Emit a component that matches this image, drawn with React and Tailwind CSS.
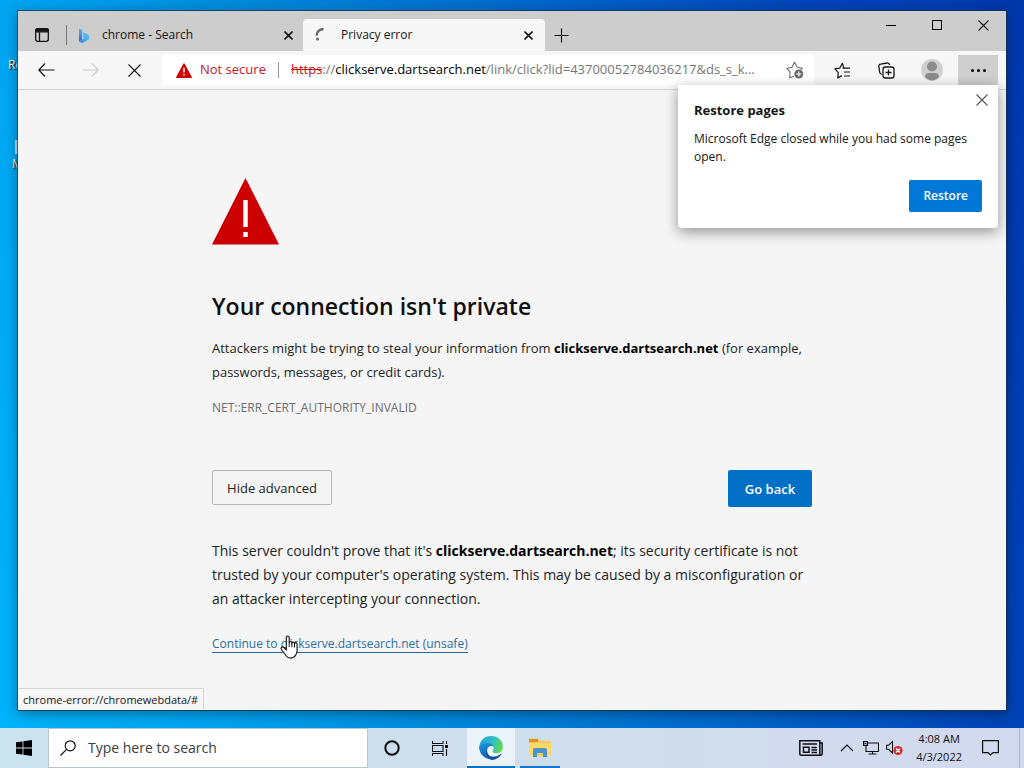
import React from "react";

const svgBase = { fill: "none", stroke: "currentColor", "aria-hidden": true };

function CrossIcon({ size = 10, width = 1 }) {
  return (
    <svg {...svgBase} width={size} height={size} viewBox={`0 0 ${size} ${size}`} strokeWidth={width}>
      <path d={`M0.5 0.5 L${size - 0.5} ${size - 0.5} M${size - 0.5} 0.5 L0.5 ${size - 0.5}`} />
    </svg>
  );
}

function TabActionsIcon() {
  return (
    <svg {...svgBase} width="14" height="14" viewBox="0 0 14 14" strokeWidth="1.3">
      <rect x="0.7" y="0.7" width="12.6" height="12.6" rx="2" />
      <path d="M0.7 3.8V2.5a1.8 1.8 0 0 1 1.8-1.8h9a1.8 1.8 0 0 1 1.8 1.8v1.3z" fill="currentColor" />
      <path d="M4.5 4v9.5" />
    </svg>
  );
}

function BingIcon() {
  return (
    <svg width="12" height="15" viewBox="0 0 12 15" aria-hidden="true">
      <defs>
        <linearGradient id="bingStem" x1="0" y1="0" x2="0" y2="1">
          <stop offset="0" stopColor="#4fb6f2" />
          <stop offset="1" stopColor="#2f62dc" />
        </linearGradient>
        <linearGradient id="bingBowl" x1="0" y1="1" x2="1" y2="0">
          <stop offset="0" stopColor="#2b84dc" />
          <stop offset="1" stopColor="#63d0f5" />
        </linearGradient>
      </defs>
      <path d="M1 0.5l2.4 1c.5.2.7.6.7 1.100V11.500L1 13.300z" fill="url(#bingStem)" />
      <path d="M5.300 5.200c-.2-.5.200-.8.700-.6l3.400 1.500c1.400.600 2.100 1.700 2.100 3.100 0 1.300-.6 2.100-1.700 2.800L6 14.200c-1.800 1-4 .6-5-.9l5.700-3.200-.9-.6c-.4-.3-.6-.7-.5-1.100z" fill="url(#bingBowl)" />
    </svg>
  );
}

function SpinnerIcon() {
  return (
    <svg {...svgBase} width="14" height="14" viewBox="0 0 14 14" strokeWidth="2.4">
      <path d="M1.500 7.500A6.500 6.500 0 0 1 8.500 1.200" />
      <circle cx="2.500" cy="11" r="1.500" fill="currentColor" stroke="none" />
    </svg>
  );
}

function ArrowIcon({ flip }) {
  return (
    <svg {...svgBase} width="17" height="14" viewBox="0 0 17 14" strokeWidth="1.200" className={flip ? "-scale-x-100" : ""}>
      <path d="M7 0.500L0.800 7L7 13.500M0.800 7H16.500" />
    </svg>
  );
}

function SmallWarning() {
  return (
    <svg width="16" height="15" viewBox="0 0 16 15" aria-hidden="true">
      <path d="M8 0.800L15.300 14.300H0.700z" fill="#c00" stroke="#c00" strokeWidth="1.200" strokeLinejoin="round" />
      <path d="M8 4.800v4.700M8 11v1.600" stroke="#fff" strokeWidth="1.500" />
    </svg>
  );
}

function AddFavoriteIcon() {
  return (
    <svg {...svgBase} width="18" height="18" viewBox="0 0 18 18" strokeWidth="1.100" className="text-[#6b6b6b]">
      <path d="M8 15.200L3.600 16.800l.5-5.600L0.900 7.300l5-1L8.600 1.300l2.700 5 5 1-1.500 1.500" strokeLinejoin="round" />
      <circle cx="12.800" cy="13" r="4.500" fill="currentColor" stroke="none" />
      <path d="M12.800 10.500v5M10.300 13h5" stroke="#fff" strokeWidth="1.200" />
    </svg>
  );
}

function FavoritesIcon() {
  return (
    <svg {...svgBase} width="17" height="17" viewBox="0 0 17 17" strokeWidth="1.200" strokeLinejoin="round">
      <path d="M10 6L8.300 1.200 5.900 6.100 0.900 6.900l3.400 3.800-.6 5.200L8 13.600" />
      <path d="M8.500 6.100h7.500M10 10h6M10 14h6" />
    </svg>
  );
}

function CollectionsIcon() {
  return (
    <svg {...svgBase} width="17" height="17" viewBox="0 0 17 17" strokeWidth="1.300">
      <path d="M3.800 12.300C2.300 12 1.800 11 1.600 9.800L0.900 4.600c-.2-1.300.4-2.200 1.700-2.400L9 1c1.300-.2 2.300.4 2.700 2" />
      <rect x="5" y="5" width="11" height="11" rx="2.200" />
      <path d="M10.500 7.500v6M7.500 10.500h6" />
    </svg>
  );
}

function AvatarIcon() {
  return (
    <svg width="22" height="22" viewBox="0 0 22 22" aria-hidden="true">
      <circle cx="11" cy="11" r="11" fill="#d0d0d0" />
      <circle cx="11" cy="7.500" r="5" fill="#8b8b8b" />
      <path d="M3.800 17.500c.6-2.500 2.200-3.500 4.200-3.500h6c2 0 3.600 1 4.200 3.500A10.800 10.800 0 0 1 11 21.500a10.800 10.800 0 0 1-7.200-4z" fill="#8b8b8b" />
    </svg>
  );
}

function HandCursor() {
  return (
    <svg width="19" height="24" viewBox="0 0 19 24" className="pointer-events-none absolute left-[68px] top-0" aria-hidden="true">
      <path
        d="M6.300 15V2.600c0-1 .6-1.600 1.400-1.600s1.500.6 1.500 1.600V7.500c.2-.7.700-1 1.300-1 .8 0 1.400.5 1.400 1.300.3-.5.700-.7 1.200-.7.800 0 1.400.5 1.400 1.300.3-.4.700-.5 1.100-.5.900 0 1.500.6 1.500 1.600v6c0 2-.6 3.200-1.400 4.600-1 1.900-2.600 3-4.900 3-2 0-3.400-.6-4.500-2.100L1.500 14.500c-.6-.8-.6-1.700 0-2.200.7-.6 1.600-.4 2.300.2z"
        fill="#fff"
        stroke="#111"
        strokeWidth="1.100"
      />
      <path d="M9.200 7v5M11.900 7.800V12.200M14.500 8.500v4" stroke="#111" strokeWidth="1" />
    </svg>
  );
}

function EdgeIcon() {
  return (
    <svg width="24" height="24" viewBox="0 0 24 24" aria-hidden="true">
      <defs>
        <linearGradient id="edgeTop" x1="0" y1="0.300" x2="1" y2="0.600">
          <stop offset="0" stopColor="#1f9fdf" />
          <stop offset="0.500" stopColor="#2bc0c8" />
          <stop offset="1" stopColor="#66d84f" />
        </linearGradient>
        <linearGradient id="edgeLeft" x1="0" y1="0" x2="0.400" y2="1">
          <stop offset="0" stopColor="#1d97dd" />
          <stop offset="1" stopColor="#1263bd" />
        </linearGradient>
      </defs>
      <path d="M0.200 11C.8 4.500 5.800 0 12 0c7 0 12 5 12 10.500 0 4-3 6.700-6.500 6.700-2.400 0-4-.8-4-1.700 0-.5 1.100-1 1.100-2.900 0-2.900-2.800-5.500-6.400-5.500-4.200 0-6.900 2-8 3.900z" fill="url(#edgeTop)" />
      <path d="M0.100 11.500C.8 8.600 4 6.700 8 6.700c3.700 0 5.800 1.600 6.500 3.800-3-1.600-6.500.6-6.500 4.300 0 4.300 3.700 8 8.600 7.600A12 12 0 0 1 0.100 11.500z" fill="url(#edgeLeft)" />
      <path d="M8.300 12.700c-1.500 5 2.700 8.600 7.200 7.900 2.700-.4 4.900-1.400 6.400-2.900.5-.4.800 0 .5.500-2 3.300-5.600 5.600-9.600 5.700-4.800-1.600-8-6.900-4.500-11.200z" fill="#124f9c" />
    </svg>
  );
}

function ExplorerIcon() {
  return (
    <svg width="24" height="20" viewBox="0 0 24 20" aria-hidden="true">
      <path d="M1 0.500h9l1.500 2.500H22a1 1 0 0 1 1 1V17H1z" fill="#f8c64a" />
      <path d="M1 1h9v3H1z" fill="#d9932a" />
      <path d="M1 5h22v12.500H1z" fill="#ffd768" />
      <path d="M5 19V12a2 2 0 0 1 2-2h10a2 2 0 0 1 2 2v7h-4v-4H9v4z" fill="#4794cf" />
      <path d="M9 15h6v3H9z" fill="#f9cd55" />
    </svg>
  );
}

function WindowButton({ label, children }) {
  return (
    <button type="button" aria-label={label} className="flex h-7 w-[46px] items-center justify-center">
      {children}
    </button>
  );
}

function ToolButton({ label, className = "", children }) {
  return (
    <button type="button" aria-label={label} className={`flex h-[30px] w-11 shrink-0 items-center justify-center ${className}`}>
      {children}
    </button>
  );
}

function TabStrip() {
  return (
    <div className="flex h-10 items-end bg-[#cdcdcd] text-xs">
      <button type="button" aria-label="Tab actions menu" className="flex h-8 w-12 items-center justify-center">
        <TabActionsIcon />
      </button>
      <div className="mb-1.5 h-5 w-px bg-[#777]" />
      <div className="flex h-8 w-[236px] items-center gap-3 pl-[11px] pr-2.5">
        <BingIcon />
        <span className="flex-1 truncate">chrome - Search</span>
        <button type="button" aria-label="Close chrome - Search tab">
          <CrossIcon size={9} width={1.6} />
        </button>
      </div>
      <div className="flex h-8 w-[242px] items-center gap-3 rounded-t bg-[#f7f7f7] pl-3 pr-3">
        <span className="text-[#666]"><SpinnerIcon /></span>
        <span className="flex-1 truncate">Privacy error</span>
        <button type="button" aria-label="Close Privacy error tab">
          <CrossIcon size={9} width={1.6} />
        </button>
      </div>
      <button type="button" aria-label="New tab" className="flex h-8 w-8 items-center justify-center">
        <svg {...svgBase} width="15" height="15" viewBox="0 0 15 15"><path d="M7.500 0.500v14M0.500 7.500h14" strokeWidth="1.200" /></svg>
      </button>
      <div className="ml-auto flex self-start">
        <WindowButton label="Minimize"><span className="h-px w-2.5 bg-black" /></WindowButton>
        <WindowButton label="Maximize"><span className="size-2.5 border border-black" /></WindowButton>
        <WindowButton label="Close"><CrossIcon size={11} width={1.1} /></WindowButton>
      </div>
    </div>
  );
}

function RestoreDialog() {
  return (
    <section aria-labelledby="restore-title" className="absolute right-2 top-[34px] z-10 w-80 rounded-b bg-white p-4 shadow-[0_4px_14px_rgba(0,0,0,0.4)]">
      <button type="button" aria-label="Dismiss" className="absolute right-2.5 top-[9px] text-[#555]">
        <CrossIcon size={12} width={1.1} />
      </button>
      <h2 id="restore-title" className="text-[13px] font-bold leading-[18px]">Restore pages</h2>
      <p className="mt-[11px] text-xs leading-[18px]">Microsoft Edge closed while you had some pages open.</p>
      <div className="mt-3.5 flex justify-end">
        <button type="button" className="h-8 rounded-xs bg-[#0078d7] px-3.5 text-xs font-semibold text-white">Restore</button>
      </div>
    </section>
  );
}

function Toolbar() {
  return (
    <div className="relative flex h-[39px] items-center border-b border-[#d2d2d2] bg-[#f7f7f7] pl-1.5 pr-2">
      <ToolButton label="Back"><ArrowIcon /></ToolButton>
      <ToolButton label="Forward" className="text-[#ccc]"><ArrowIcon flip /></ToolButton>
      <ToolButton label="Stop loading"><CrossIcon size={13} width={1.1} /></ToolButton>
      <div className="ml-1.5 flex h-[30px] min-w-0 flex-1 items-center rounded-xs bg-white pl-3.5 pr-2.5">
        <SmallWarning />
        <button type="button" className="ml-2 shrink-0 text-[13px] text-[#c5161c]">Not secure</button>
        <div className="mx-3 h-4 w-px bg-[#999]" />
        <div role="textbox" tabIndex={0} aria-label="Address and search bar" className="min-w-0 flex-1 overflow-hidden whitespace-nowrap text-[13px] text-[#767676]">
          <span className="text-[#c5161c] line-through">https</span>://<span className="text-black">clickserve.dartsearch.net</span>/link/click?lid=43700052784036217&amp;ds_s_k...
        </div>
        <button type="button" aria-label="Add this page to favorites"><AddFavoriteIcon /></button>
      </div>
      <ToolButton label="Favorites" className="ml-1.5"><FavoritesIcon /></ToolButton>
      <ToolButton label="Collections"><CollectionsIcon /></ToolButton>
      <ToolButton label="Profile" className="ml-0.5"><AvatarIcon /></ToolButton>
      <button type="button" aria-label="Settings and more" className="ml-1 flex h-[30px] w-10 items-center justify-center gap-[3px] bg-[#cecece]">
        <span className="size-[3px] rounded-full bg-black" />
        <span className="size-[3px] rounded-full bg-black" />
        <span className="size-[3px] rounded-full bg-black" />
      </button>
      <RestoreDialog />
    </div>
  );
}

function ErrorPage() {
  return (
    <main className="relative flex-1 bg-[#f5f5f5] px-8 pb-12 pt-[88px]">
      <div className="mx-auto max-w-[600px]">
        <svg width="67" height="67" viewBox="0 0 67 67" aria-hidden="true">
          <path d="M33.500 0L67 66.500H0z" fill="#c00" />
          <path d="M33.500 22v27M33.500 54v5" stroke="#fff" strokeWidth="4.500" />
        </svg>
        <h1 className="mt-[45px] text-[23px] font-semibold leading-8 text-[#101010]">Your connection isn't private</h1>
        <p className="mt-3.5 text-[13px] leading-6 text-[#222]">
          Attackers might be trying to steal your information from <strong className="font-bold text-black">clickserve.dartsearch.net</strong> (for example, passwords, messages, or credit cards).
        </p>
        <p className="mt-3 text-xs leading-6 text-[#6c6c6c]">NET::ERR_CERT_AUTHORITY_INVALID</p>
        <div className="mt-[50px] flex items-start justify-between">
          <button type="button" className="h-[35px] w-[120px] rounded-xs border border-[#b8b8b8] pt-0.5 text-[13px] text-[#222]">Hide advanced</button>
          <button type="button" className="h-[37px] w-[84px] rounded-xs bg-[#0070c6] pt-0.5 text-[13px] font-semibold text-white">Go back</button>
        </div>
        <p className="mt-8 text-sm leading-6 text-[#222]">
          This server couldn't prove that it's <strong className="font-bold text-black">clickserve.dartsearch.net</strong>; its security certificate is not trusted by your computer's operating system. This may be caused by a misconfiguration or an attacker intercepting your connection.
        </p>
        <div className="relative mt-6 flex">
          <a href="#" className="border-b border-[#2b6796] text-xs leading-[17px] text-[#2b6da3]">Continue to clickserve.dartsearch.net (unsafe)</a>
          <HandCursor />
        </div>
      </div>
      <div className="absolute bottom-0 left-0 border-r border-t border-[#d4d4d4] bg-[#f7f7f7] px-[5px] text-[11px] leading-[21px]">chrome-error://chromewebdata/#</div>
    </main>
  );
}

function Taskbar() {
  return (
    <footer className="flex h-10 items-stretch bg-linear-to-r from-[#cbe3ef] via-[#cfdeec] to-[#d3d9ee] text-[#0c1016]">
      <button type="button" aria-label="Start" className="flex w-12 items-center justify-center">
        <svg width="16" height="16" viewBox="0 0 16 16" aria-hidden="true"><path d="M0 2.300L6.600 1.400V7.500H0zM7.400 1.200L16 0v7.500H7.400zM0 8.400h6.600v6.200L0 13.700zM7.400 8.400H16V16l-8.600-1.200z" fill="#000" /></svg>
      </button>
      <label className="flex w-80 items-center gap-3 border border-[#b9c4cb] bg-white pl-[11px]">
        <svg {...svgBase} width="16" height="16" viewBox="0 0 16 16" strokeWidth="1.200" className="shrink-0"><circle cx="10.200" cy="5.800" r="5" /><path d="M6.600 9.400L0.500 15.500" /></svg>
        <input type="text" aria-label="Type here to search" placeholder="Type here to search" className="min-w-0 flex-1 text-sm outline-none placeholder:text-[#3c3c3c]" />
      </label>
      <button type="button" aria-label="Cortana" className="flex w-12 items-center justify-center">
        <svg {...svgBase} width="16" height="16" viewBox="0 0 16 16" strokeWidth="2"><circle cx="8" cy="8" r="6.700" /></svg>
      </button>
      <button type="button" aria-label="Task View" className="flex w-12 items-center justify-center">
        <svg {...svgBase} width="17" height="15" viewBox="0 0 17 15" strokeWidth="1.100"><path d="M0.500 0v2.500h10.500V0M0.500 15v-2.500h10.500V15M0.500 4.500h10.500v6H0.500zM14.500 0v3M14.500 8v7" /><path d="M13 4h3v3h-3z" fill="currentColor" stroke="none" /></svg>
      </button>
      <button type="button" aria-label="Microsoft Edge" className="ml-[3px] flex w-12 items-center justify-center border-b-2 border-[#0a70c4] bg-[#eaf4fa] pt-0.5"><EdgeIcon /></button>
      <button type="button" aria-label="File Explorer" className="ml-[5px] flex w-10 items-center justify-center border-b-2 border-[#1279cc] pt-0.5"><ExplorerIcon /></button>
      <div className="ml-auto flex items-center">
        <button type="button" aria-label="News and interests" className="mr-[17px]">
          <svg {...svgBase} width="24" height="16" viewBox="0 0 24 16" strokeWidth="1.500"><path d="M0.800 0.800h20v14.400H2.300a1.500 1.500 0 0 1-1.500-1.500zM20.800 3h2.400v10.700a1.500 1.500 0 0 1-1.500 1.500h-2" /><path d="M3.500 4h14.500M12.500 7.500H18M12.500 10H18M12.500 12.500H18M4.500 7.300h5.500v5H4.500z" /></svg>
        </button>
        <button type="button" aria-label="Show hidden icons" className="mr-[9px]">
          <svg {...svgBase} width="14" height="8" viewBox="0 0 14 8" strokeWidth="1.200"><path d="M1 7l6-6 6 6" /></svg>
        </button>
        <button type="button" aria-label="Network" className="mr-[7px]">
          <svg {...svgBase} width="16" height="14" viewBox="0 0 16 14" strokeWidth="1.100"><path d="M4.500 2h11v8.500H3V5M9.500 10.500V13M5.500 13h8M0.500 0.600h4v3.800h-4zM1.500 2.500h2" /></svg>
        </button>
        <button type="button" aria-label="Volume muted" className="mr-[13px]">
          <svg {...svgBase} width="17" height="16" viewBox="0 0 17 16" strokeWidth="1.100"><path d="M0.600 5.200h2L6.500 1.500v11.500L2.600 9.300h-2z" /><circle cx="12" cy="10.500" r="4.600" fill="#d42b2b" stroke="none" /><path d="M10 8.500l4 4M14 8.500l-4 4" stroke="#fff" strokeWidth="1.300" /></svg>
        </button>
        <div className="text-center text-[11px] leading-[18px]"><div>4:08 AM</div><div>4/3/2022</div></div>
        <button type="button" aria-label="Notifications" className="ml-5 mr-5">
          <svg {...svgBase} width="17" height="16" viewBox="0 0 17 16" strokeWidth="1.200"><path d="M0.600 0.600h15.800v12H11L8.500 15 6 12.600H0.600z" /></svg>
        </button>
        <div className="mr-1 h-10 w-px bg-[#aeb7c8]" />
      </div>
    </footer>
  );
}

export default function App() {
  return (
    <div className="flex min-h-screen flex-col bg-[linear-gradient(75deg,#00b4fa_0%,#00a4f0_18%,#008cdc_35%,#0064c8_62%,#0044b8_82%,#0038ac_100%)] font-['Open_Sans','Noto_Sans',sans-serif] text-[13px] text-[#161616]">
      <div className="relative flex flex-1 flex-col px-[18px] pb-[18px] pt-[11px]">
        <span className="absolute left-2 top-[57px] text-xs text-white [text-shadow:1px_1px_1px_#000]">Recycle</span>
        <span className="absolute left-[15px] top-[140px] h-3.5 w-3 bg-[#b9e2f7]" />
        <span className="absolute left-3 top-[156px] text-xs text-white [text-shadow:1px_1px_1px_#000]">Microsoft</span>
        <div className="relative flex flex-1 flex-col shadow-[0_0_0_1px_rgba(20,50,80,0.7),0_3px_12px_rgba(0,0,0,0.4)]">
          <TabStrip />
          <Toolbar />
          <ErrorPage />
        </div>
      </div>
      <Taskbar />
    </div>
  );
}
